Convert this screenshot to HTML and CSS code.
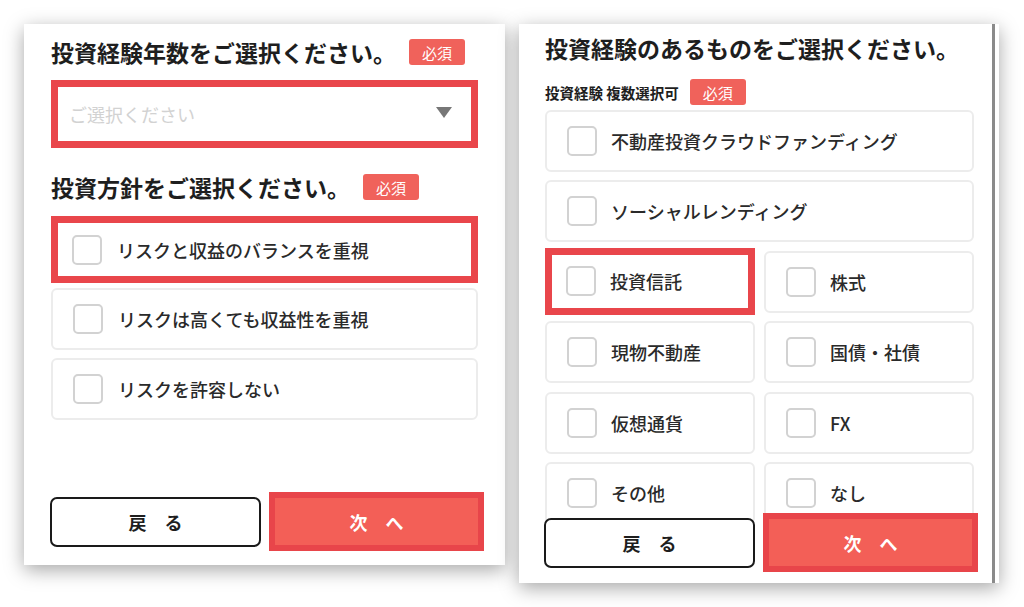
FILE: index.html
```html
<!DOCTYPE html>
<html lang="ja">
<head>
    <meta charset="UTF-8">
    <meta name="viewport" content="width=device-width, initial-scale=1.0">
    <title>投資経験の入力</title>
    <link rel="stylesheet" href="styles.css">
</head>
<body>

<div class="screens">
    <!-- step: years / policy -->
    <div class="card card-left">
        <div class="title-row">
            <h2>投資経験年数をご選択ください。</h2>
            <span class="badge">必須</span>
        </div>
        <div class="select-box mark">
            <span class="placeholder">ご選択ください</span>
            <span class="arrow"></span>
        </div>

        <div class="title-row title-second">
            <h2>投資方針をご選択ください。</h2>
            <span class="badge">必須</span>
        </div>
        <div class="option-list">
            <label class="option mark"><span class="check"></span>リスクと収益のバランスを重視</label>
            <label class="option"><span class="check"></span>リスクは高くても収益性を重視</label>
            <label class="option"><span class="check"></span>リスクを許容しない</label>
        </div>

        <div class="buttons">
            <button class="btn-back">戻　る</button>
            <button class="btn-next">次　へ</button>
        </div>
    </div>

    <!-- step: experience -->
    <div class="card card-right">
        <div class="title-row">
            <h2>投資経験のあるものをご選択ください。</h2>
        </div>
        <div class="sub-row">
            <span class="sub-label">投資経験 複数選択可</span>
            <span class="badge">必須</span>
        </div>
        <div class="option-grid">
            <label class="option wide"><span class="check"></span>不動産投資クラウドファンディング</label>
            <label class="option wide"><span class="check"></span>ソーシャルレンディング</label>
            <label class="option mark"><span class="check"></span>投資信託</label>
            <label class="option"><span class="check"></span>株式</label>
            <label class="option"><span class="check"></span>現物不動産</label>
            <label class="option"><span class="check"></span>国債・社債</label>
            <label class="option"><span class="check"></span>仮想通貨</label>
            <label class="option"><span class="check"></span>FX</label>
            <label class="option"><span class="check"></span>その他</label>
            <label class="option"><span class="check"></span>なし</label>
        </div>

        <div class="buttons buttons-fixed">
            <button class="btn-back">戻　る</button>
            <button class="btn-next">次　へ</button>
        </div>
    </div>
</div>

</body>
</html>
```

FILE: styles.css
```css
body {
    margin: 0;
    background-color: #fff;
    color: #222;
    font-family: "Noto Sans CJK JP", "Noto Sans", sans-serif;
    width: 1024px;
    height: 607px;
    overflow: hidden;
}
.screens {
    display: flex;
    align-items: flex-start;
    gap: 14px;
    padding: 24px 0 0 24px;
}
.card {
    background-color: #fff;
    box-shadow: 0 5px 18px rgba(0, 0, 0, 0.35);
    box-sizing: border-box;
}
.card-left {
    width: 481px;
    height: 541px;
    padding: 13px 27px 14px;
    display: flex;
    flex-direction: column;
}
.card-right {
    width: 480px;
    height: 559px;
    padding: 9px 25px 0 26px;
    position: relative;
    overflow: hidden;
}
.card-right::after {
    content: "";
    position: absolute;
    top: 0;
    bottom: 0;
    right: 4px;
    width: 3px;
    background-color: #8a8a8a;
}

.title-row {
    display: flex;
    align-items: center;
    height: 30px;
}
.title-row h2 {
    margin: 0;
    font-size: 23px;
    font-weight: 700;
    line-height: 30px;
    color: #1e1e1e;
    white-space: nowrap;
}
.title-second {
    margin-top: 24px;
}
.badge {
    display: flex;
    align-items: center;
    justify-content: center;
    width: 56px;
    height: 26px;
    margin-left: 13px;
    background-color: #f0625b;
    color: #fff;
    border-radius: 3px;
    font-size: 15px;
    flex-shrink: 0;
}
.sub-row {
    display: flex;
    align-items: center;
    height: 26px;
    margin-top: 16px;
}
.sub-label {
    font-size: 14.5px;
    font-weight: 700;
    color: #1e1e1e;
}
.sub-row .badge {
    margin-left: 11px;
}

.select-box {
    display: flex;
    align-items: center;
    justify-content: space-between;
    height: 68px;
    margin-top: 13px;
    padding: 0 19px 0 11px;
    box-sizing: border-box;
}
.placeholder {
    font-size: 18px;
    color: #d2d2d2;
}
.arrow {
    width: 0;
    height: 0;
    border-left: 8px solid transparent;
    border-right: 8px solid transparent;
    border-top: 11px solid #777;
    margin-top: -3px;
}

.option-list {
    display: flex;
    flex-direction: column;
    gap: 8px;
    margin-top: 16px;
}
.option-grid {
    display: grid;
    grid-template-columns: 1fr 1fr;
    column-gap: 9px;
    row-gap: 8.4px;
    margin-top: 5px;
}
.option {
    display: flex;
    align-items: center;
    height: 62px;
    padding-left: 20px;
    border: 2px solid #ececec;
    border-radius: 6px;
    box-sizing: border-box;
    font-size: 18px;
    font-weight: 500;
    color: #2a2a2a;
    white-space: nowrap;
}
.option.wide {
    grid-column: span 2;
}
.check {
    width: 30px;
    height: 30px;
    border: 2px solid #d2d2d2;
    border-radius: 5px;
    box-sizing: border-box;
    margin-right: 15px;
    flex-shrink: 0;
}
.option-grid .check {
    margin-right: 14px;
}

/* red marks drawn on the screenshot */
.mark {
    border: 7px solid #e9464b;
    border-radius: 0;
}
.option.mark {
    height: 67px;
    padding-left: 14px;
    margin: -2px 0 -3px;
}
.option-grid .option.mark {
    margin: -3px 0 -2px;
}

.buttons {
    display: flex;
    justify-content: space-between;
    align-items: center;
    margin: auto -6px 0 -1px;
}
.buttons-fixed {
    position: absolute;
    left: 25px;
    right: 21px;
    bottom: 11px;
    margin: 0;
}
button {
    font-family: "Noto Sans CJK JP", sans-serif;
    font-size: 18px;
    font-weight: 700;
    box-sizing: border-box;
    cursor: pointer;
}
.btn-back {
    width: 211px;
    height: 50px;
    background-color: #fff;
    color: #1e1e1e;
    border: 2px solid #1a1a1a;
    border-radius: 7px;
}
.btn-next {
    width: 215px;
    height: 59px;
    background-color: #f35f57;
    color: #fff;
    border: 6px solid #e8454a;
}
```
